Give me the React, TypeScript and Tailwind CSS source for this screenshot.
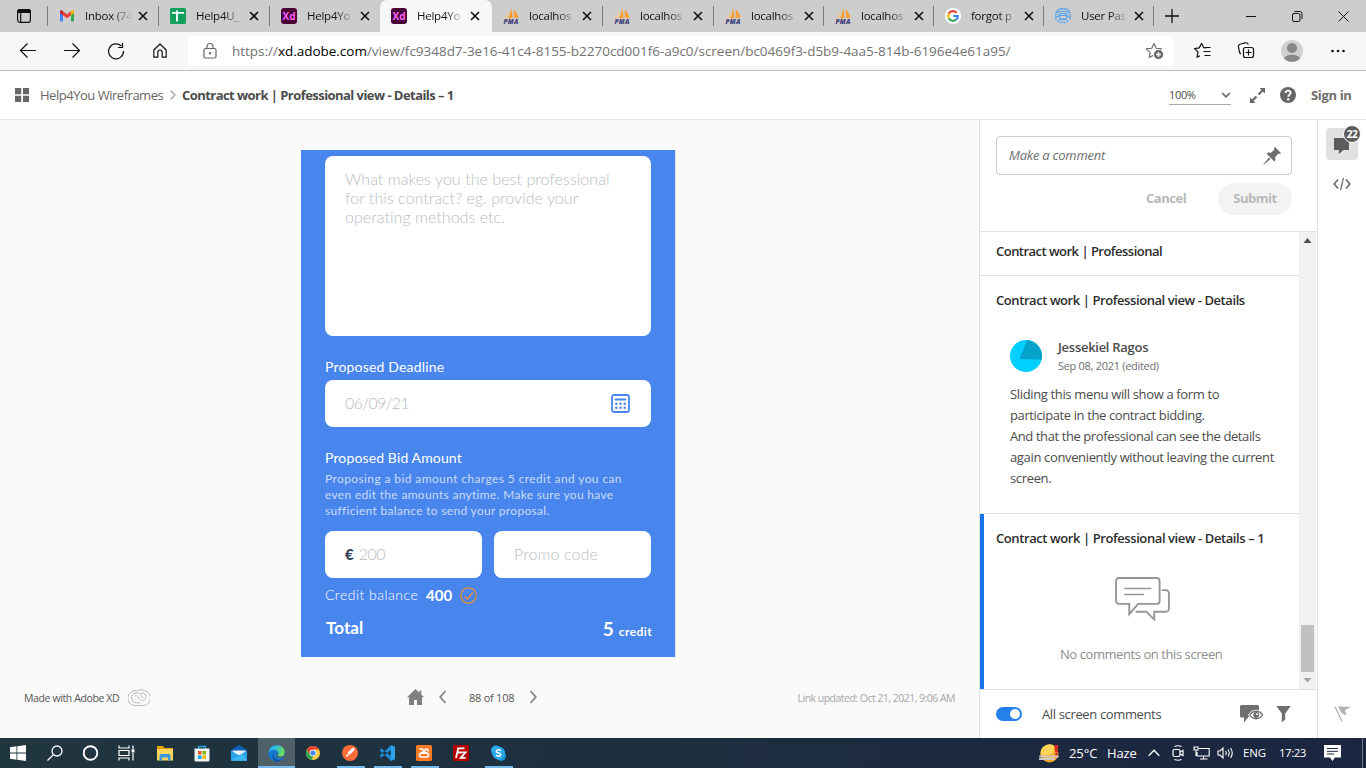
import React from "react";

const CLEAN = "font-['Open_Sans',sans-serif] whitespace-nowrap";
const SEGOE = "font-['Open_Sans',sans-serif] whitespace-nowrap";
const ROUND = "font-['Lato',sans-serif] whitespace-nowrap";

/* ---------- favicons ---------- */
const Gmail = () => (
  <svg width="16" height="16" viewBox="0 0 16 16">
    <path d="M1 4v8.600c0 .6.4 1 1 1h2V6.200z" fill="#4285f4" />
    <path d="M15 4v8.600c0 .6-.4 1-1 1h-2V6.200z" fill="#34a853" />
    <path d="M12 3.200v4l3-2.200V3.800c0-1.300-1.400-1.900-2.300-1.200z" fill="#fbbc04" />
    <path d="M4 7.200v-4L8 6.200l4-3v4l-4 3z" fill="#ea4335" />
    <path d="M1 5l3 2.200v-4l-.7-.6C2.400 1.900 1 2.500 1 3.800z" fill="#c5221f" />
  </svg>
);
const Sheets = () => (
  <svg width="16" height="16" viewBox="0 0 16 16">
    <rect width="16" height="16" rx="1.500" fill="#12a05c" />
    <path d="M2 4.900h12M7 2.500v11" stroke="#fff" strokeWidth="1.900" />
  </svg>
);
const Xd = () => (
  <span className="flex h-4 w-4 items-center justify-center rounded-[3px] bg-[#470137] font-['Open_Sans',sans-serif] text-[10px] leading-none font-bold text-[#ff61f6]">
    Xd
  </span>
);
const Pma = () => (
  <span className="flex h-4 w-4 flex-col items-center">
    <svg width="16" height="11" viewBox="0 0 16 11" className="shrink-0">
      <path d="M7.800 0C9 3 9.600 6 9.400 10L4.800 10.500C6.800 7.500 7.800 4 7.800 0z" fill="#f89c2e" />
      <path d="M10.500 1c2.500 2.500 4.500 5.500 5.200 9l-5.200-.2c.6-2.500.6-6 0-8.800z" fill="#f6a13c" />
      <path d="M5.800 2.500C5.200 6 3.500 8.500 .8 10.500l3.200-.3C5.500 8 6.300 5.500 5.800 2.500z" fill="#fbc98a" />
    </svg>
    <span className="font-['Open_Sans',sans-serif] text-[6.500px] leading-[5px] font-extrabold tracking-[0.2px] text-[#40407a] italic">PMA</span>
  </span>
);
const Google = () => (
  <svg width="16" height="16" viewBox="0 0 16 16">
    <circle cx="8" cy="8" r="8" fill="#fff" />
    <g fill="none" strokeWidth="2.200">
      <path d="M11.600 4.700A4.900 4.900 0 0 0 3.700 5.700" stroke="#ea4335" />
      <path d="M3.700 5.700a4.900 4.900 0 0 0 0 4.600" stroke="#fbbc05" />
      <path d="M3.700 10.300a4.900 4.900 0 0 0 7.400 1.400" stroke="#34a853" />
      <path d="M11.100 11.700A4.900 4.900 0 0 0 12.900 8H8.200" stroke="#4285f4" />
    </g>
  </svg>
);
const Fingerprint = () => (
  <svg width="16" height="16" viewBox="0 0 16 16" fill="none" stroke="#55a5ee" strokeWidth="1.100">
    <path d="M.8 12V6C1.500 2.300 4.500.6 8 .6S14.500 2.300 15.200 6v6" />
    <path d="M2 4.500C5 2.800 11 2.800 14 4.500M3 7C5.500 4.800 10.500 4.800 13 7M.8 9.500L5 7.500h6l4.200 2" />
    <path d="M4.500 8v1.500a2 2 0 0 0 2 1.500h3a2 2 0 0 0 2-1.500V8M2.500 14l2.500-2.500h6l2.500 2.500M5.500 15.500c.5-2 4.500-2 5 0" />
  </svg>
);

type TabProps = { icon: React.ReactNode; title: string; width: string; active?: boolean; sep?: boolean };
function Tab({ icon, title, width, active, sep }: TabProps) {
  return (
    <div className={`flex h-8 shrink-0 items-center ${width} ${active ? "rounded-t-[7px] bg-[#f7f7f7]" : ""}`}>
      <div className="ml-[11px] w-4 shrink-0">{icon}</div>
      <div
        className={`${SEGOE} ml-[10px] w-[46px] shrink-0 text-[11.5px] leading-[18px] tracking-[-0.25px] text-[#111] [mask-image:linear-gradient(90deg,#000_60%,#0002_98%)]`}
      >
        {title}
      </div>
      <svg className="ml-[7px] shrink-0" width="10" height="10" viewBox="0 0 10 10" stroke="#111" strokeWidth="1.600">
        <path d="M1 1l8 8M9 1L1 9" />
      </svg>
      <div className="grow" />
      {sep && <div className="h-5 w-px bg-[#7d7d7d]" />}
    </div>
  );
}

function TabStrip() {
  return (
    <div className="flex h-8 shrink-0 items-center bg-[#cdcdcd]">
      <div className="flex w-[48px] items-center justify-between pl-4">
        <svg width="16" height="16" viewBox="0 0 16 16" fill="none" stroke="#111" strokeWidth="1.200">
          <rect x="1.600" y="1.600" width="12.800" height="12.800" rx="2.500" />
          <path d="M1.600 3.500a2 2 0 0 1 2-2h8.800a2 2 0 0 1 2 2V4.500H1.600z" fill="#111" />
          <path d="M4.700 5v9.400" />
        </svg>
        <div className="h-5 w-px bg-[#7d7d7d]" />
      </div>
      <Tab width="w-[111px]" icon={<Gmail />} title="Inbox (74" sep />
      <Tab width="w-[111px]" icon={<Sheets />} title="Help4U_" sep />
      <Tab width="w-[110px]" icon={<Xd />} title="Help4Yo" />
      <Tab width="w-[112px]" icon={<Xd />} title="Help4Yo" active />
      <Tab width="w-[111px]" icon={<Pma />} title="localhos" sep />
      <Tab width="w-[111px]" icon={<Pma />} title="localhos" sep />
      <Tab width="w-[110px]" icon={<Pma />} title="localhos" sep />
      <Tab width="w-[110px]" icon={<Pma />} title="localhos" sep />
      <Tab width="w-[110px]" icon={<Google />} title="forgot p" sep />
      <Tab width="w-[110px]" icon={<Fingerprint />} title="User Pas" sep />
      <svg className="ml-[10px]" width="16" height="16" viewBox="0 0 16 16" stroke="#111" strokeWidth="1.300">
        <path d="M8 1v14M1 8h14" />
      </svg>
      <div className="grow" />
      <svg width="110" height="16" viewBox="0 0 110 16" className="mr-[13px] shrink-0" fill="none" stroke="#111" strokeWidth="1">
        <path d="M3 8.500h10" />
        <rect x="49.500" y="5.500" width="7.500" height="8" rx="1.500" />
        <path d="M51.500 3.500h5.500a2 2 0 0 1 2 2v5.500" />
        <path d="M95.500 3.500l10 10M105.500 3.500l-10 10" />
      </svg>
    </div>
  );
}

function Toolbar() {
  return (
    <div className="flex h-[39px] shrink-0 items-center border-b border-[#bdbdbd] bg-[#f7f7f7]">
      <svg width="188" height="38" viewBox="0 0 188 38" fill="none" stroke="#111" strokeWidth="1.200" className="shrink-0">
        <path d="M36 18.500H20.500M27.500 11.500l-7 7 7 7" />
        <path d="M64 18.500h15.500M72.500 11.500l7 7-7 7" />
        <path d="M121.300 14A7.500 7.500 0 1 0 123.500 19M122.500 11v4.500H118" />
        <path d="M153.800 18l6.200-6 6.200 6v7.200h-4v-5a2.200 2.200 0 0 0-4.400 0v5h-4z" strokeLinejoin="round" />
      </svg>
      <div className="flex h-[30px] w-[986px] shrink-0 items-center rounded-[4px] bg-white">
        <svg className="ml-[14px] shrink-0" width="16" height="18" viewBox="0 0 16 18" fill="none" stroke="#666" strokeWidth="1.200">
          <rect x="2" y="6.500" width="12" height="9.500" rx="1.500" />
          <path d="M5 6.500V4.500a3 3 0 0 1 6 0v2" />
          <circle cx="8" cy="11.300" r=".6" fill="#666" />
        </svg>
        <div className="ml-[14px] font-['Open_Sans',sans-serif] text-[13.5px] leading-[20px] tracking-[-0.02px] whitespace-nowrap text-[#727272]">
          https://<span className="text-black">xd.adobe.com</span>
          /view/fc9348d7-3e16-41c4-8155-b2270cd001f6-a9c0/screen/bc0469f3-d5b9-4aa5-814b-6196e4e61a95/
        </div>
        <div className="grow" />
        <svg className="mr-[9px] shrink-0" width="20" height="18" viewBox="0 0 20 18" fill="none" stroke="#666" strokeWidth="1.100">
          <path d="M9 1.500l2.200 4.700 5.300.6-4 3.600 1 5L9 13l-4.800 2.600 1-5.200-4-3.600 5.500-.6z" strokeLinejoin="round" />
          <circle cx="13.500" cy="12.500" r="5" fill="#666" stroke="#fff" strokeWidth="1" />
          <path d="M11 12.500h5M13.500 10v5" stroke="#fff" strokeWidth="1.300" />
        </svg>
      </div>
      <svg width="192" height="38" viewBox="0 0 192 38" fill="none" stroke="#111" strokeWidth="1.200" className="shrink-0">
        <path d="M32.500 16l-2.700-.3-2.300-4.200-2.300 4.400-4.700.7 3.500 3.400-1 5.200 3-1.500" strokeLinejoin="round" />
        <path d="M30.500 15.500h6M29.500 19.500h7M30.500 23.500h6" />
        <rect x="69.500" y="15.500" width="10" height="10" rx="2" />
        <path d="M74.500 17.500v6M71.500 20.500h6M67 22a3 3 0 0 1-1.500-2l-1-5a2.500 2.500 0 0 1 2-3l5-1.200a2.500 2.500 0 0 1 2.800 1.700" />
        <circle cx="118" cy="19" r="11" fill="#d2d0ce" stroke="none" />
        <circle cx="118" cy="16" r="5" fill="#8a8886" stroke="none" />
        <path d="M110 26.400c1.500-5 14.500-5 16 0a11 11 0 0 1-16 0z" fill="#8a8886" stroke="none" />
        <g fill="#111" stroke="none">
          <circle cx="158.500" cy="19" r="1.300" />
          <circle cx="164" cy="19" r="1.300" />
          <circle cx="169.500" cy="19" r="1.300" />
        </g>
      </svg>
    </div>
  );
}

function AppHeader() {
  return (
    <div className={`${CLEAN} flex h-[49px] shrink-0 items-center border-b border-[#e4e4e4] bg-white text-[13px] leading-5`}>
      <svg className="ml-[15px] shrink-0" width="14" height="14" viewBox="0 0 14 14" fill="#666">
        <path d="M0 0h6.200v6.200H0zM8 0h6.200v6.200H8zM0 7.800h6.200V14H0zM8 7.800h6.200V14H8z" />
      </svg>
      <div className="ml-[11px] w-[125px] tracking-[-0.48px] text-[#666]">Help4You Wireframes</div>
      <svg className="ml-[4px] shrink-0" width="8" height="12" viewBox="0 0 8 12" fill="none" stroke="#aaa" strokeWidth="1.500">
        <path d="M1.500 1.500L6 6l-4.500 4.500" />
      </svg>
      <div className="ml-[5px] font-bold tracking-[-0.55px] text-[#4b4b4b]">Contract work | Professional view - Details – 1</div>
      <div className="grow" />
      <div className="flex h-5 w-[62px] items-center justify-between border-b border-[#aaa]">
        <span className="text-[11px] leading-4 tracking-[-0.35px] text-[#4b4b4b]">100%</span>
        <svg width="10" height="8" viewBox="0 0 10 8" fill="none" stroke="#666" strokeWidth="1.700">
          <path d="M1.200 2L5 5.800 8.800 2" />
        </svg>
      </div>
      <svg className="ml-[18px]" width="17" height="17" viewBox="0 0 17 17" fill="#666" stroke="#666">
        <path d="M10.500 1h5.500v5.500zM1 10.500V16h5.500z" stroke="none" />
        <path d="M9.500 7.500l4-4M7.500 9.500l-4 4" strokeWidth="2" />
      </svg>
      <svg className="ml-[14px]" width="16" height="16" viewBox="0 0 16 16">
        <circle cx="8" cy="8" r="8" fill="#666" />
        <path d="M5.500 6.100c0-3.200 5.100-3.200 5.100-.3 0 1.700-2.300 1.700-2.300 3.900" fill="none" stroke="#fff" strokeWidth="1.900" />
        <circle cx="8.200" cy="12.300" r="1.200" fill="#fff" />
      </svg>
      <div className="mr-[15px] ml-[15px] w-[40px] font-bold tracking-[-0.35px] text-[#6e6e6e]">Sign in</div>
    </div>
  );
}

function Field({ className, children }: { className: string; children?: React.ReactNode }) {
  return <div className={`flex rounded-[8px] bg-white ${className}`}>{children}</div>;
}

function Artboard() {
  return (
    <div className={`${ROUND} ml-[301px] flex h-[507px] w-[375px] shrink-0 flex-col border-r border-[#d9e2f0] bg-[#4885ed] px-6 pt-[6px]`}>
      <Field className="h-[180px] w-[326px] shrink-0 pt-[13px] pl-5">
        <div className="text-[16px] leading-[19px] font-light text-[#b7bdc3]">
          <p className="tracking-[0.06px]">What makes you the best professional</p>
          <p className="tracking-[0.04px]">for this contract? eg. provide your</p>
          <p className="tracking-[0.04px]">operating methods etc.</p>
        </div>
      </Field>
      <div className="mt-[21px] text-[14px] leading-5 tracking-[0.18px] text-white">Proposed Deadline</div>
      <Field className="mt-[3px] h-[47px] w-[326px] shrink-0 items-center justify-between pr-[21px] pl-5">
        <span className="pb-px text-[16px] leading-5 font-light tracking-[-0.7px] text-[#b7bdc3]">06/09/21</span>
        <svg width="19" height="19" viewBox="0 0 19 19" fill="none" stroke="#4885ed" strokeWidth="1.800">
          <rect x="1" y="1" width="17" height="17" rx="2" />
          <path d="M4.500 5.500h10" strokeLinecap="round" />
          <g fill="#4885ed" stroke="none">
            <circle cx="5.300" cy="9.800" r="1.200" /><circle cx="9.500" cy="9.800" r="1.200" /><circle cx="13.700" cy="9.800" r="1.200" />
            <circle cx="5.300" cy="13.800" r="1.200" /><circle cx="9.500" cy="13.800" r="1.200" /><circle cx="13.700" cy="13.800" r="1.200" />
          </g>
        </svg>
      </Field>
      <div className="mt-[21px] text-[14px] leading-5 tracking-[0.13px] text-white">Proposed Bid Amount</div>
      <div className="mt-[3px] text-[12px] leading-4 text-[#cadcfa]">
        <p className="tracking-[0.39px]">Proposing a bid amount charges 5 credit and you can</p>
        <p className="tracking-[0.31px]">even edit the amounts anytime. Make sure you have</p>
        <p className="tracking-[0.31px]">sufficient balance to send your proposal.</p>
      </div>
      <div className="mt-3 flex w-[326px] justify-between text-[16px] leading-5 font-light text-[#b7bdc3]">
        <Field className="h-[47px] w-[157px] items-center pb-px pl-5">
          <span className="text-[15px] font-black text-[#2f4054]">€</span>
          <span className="ml-[5px] tracking-[-0.5px]">200</span>
        </Field>
        <Field className="h-[47px] w-[157px] items-center pb-px pl-5">
          <span className="tracking-[0.1px]">Promo code</span>
        </Field>
      </div>
      <div className="mt-[7px] flex items-center text-[14px] leading-5 text-white">
        <span className="w-[94px] font-light tracking-[0.48px]">Credit balance</span>
        <span className="ml-[7px] w-[27px] text-[15px] font-bold">400</span>
        <svg className="ml-[7px]" width="17" height="17" viewBox="0 0 17 17" fill="none" stroke="#e98b3a" strokeWidth="1.300">
          <circle cx="8.500" cy="8.500" r="7.700" />
          <path d="M4.500 9l3 3L13 5.500" />
        </svg>
      </div>
      <div className="mt-3 flex w-[327px] items-start justify-between pl-px font-bold text-white">
        <span className="text-[17px] leading-[22px] tracking-[0.1px]">Total</span>
        <span className="flex items-baseline pt-px">
          <span className="text-[19px] leading-[22px]">5</span>
          <span className="ml-[5px] text-[12px] tracking-[0.4px]">credit</span>
        </span>
      </div>
    </div>
  );
}

function Stage() {
  return (
    <div className="flex w-[979px] shrink-0 flex-col bg-[#fafafa] pt-[30px]">
      <Artboard />
      <div className={`${CLEAN} flex h-[81px] items-center text-[10.5px] leading-4 text-[#555]`}>
        <span className="ml-6 w-[96px] pt-px tracking-[-0.38px]">Made with Adobe XD</span>
        <svg className="ml-2 mt-px" width="22" height="18" viewBox="0 0 22 18" fill="none" stroke="#b8b8b8" strokeWidth="1">
          <path d="M8.500 16.500a7.500 7.500 0 1 1 .5-14.700C12 .2 14.500.5 16.500 1.500a7.700 7.700 0 0 1-3.500 15z" />
          <path d="M12.500 13.800H8.500a5 5 0 1 1 2.800-9.200c1.400 1 2.500 2.800 3.700 4.400" />
          <path d="M7 6.800c2-.5 3 1 4 2.300 1 1.500 2 2.500 3.500 2.300a3.700 3.700 0 1 0-2-6.900" />
        </svg>
        <svg className="-mt-px ml-[257px]" width="17" height="16" viewBox="0 0 17 16" fill="#808080">
          <path d="M8.500 0L0 8.200h2V16h5v-5h3v5h5V8.200h2l-2.700-2.600V1.500h-2v2.200z" />
        </svg>
        <svg className="-mt-px ml-[15px]" width="8" height="14" viewBox="0 0 8 14" fill="none" stroke="#808080" strokeWidth="1.700">
          <path d="M6.500 1L1.200 7l5.300 6" />
        </svg>
        <span className="ml-[22px] w-[46px] pt-px text-[11px] tracking-[-0.25px]">88 of 108</span>
        <svg className="-mt-px ml-[14px]" width="8" height="14" viewBox="0 0 8 14" fill="none" stroke="#808080" strokeWidth="1.700">
          <path d="M1.500 1l5.300 6-5.300 6" />
        </svg>
        <div className="grow" />
        <span className="mr-6 pt-px tracking-[-0.52px] text-[#a6a6a6]">Link updated: Oct 21, 2021, 9:06 AM</span>
      </div>
    </div>
  );
}

function CommentPanel() {
  return (
    <div className={`${CLEAN} flex w-[339px] shrink-0 flex-col border-x border-[#e1e1e1] bg-white text-[13px] leading-5`}>
      <div className="h-[111px] shrink-0 pt-4 pl-4">
        <div className="flex h-[39px] w-[296px] items-center justify-between rounded-[4px] border border-[#cacaca] pr-[10px] pl-3">
          <span className="pb-[2px] tracking-[-0.23px] text-[#6e6e6e] italic">Make a comment</span>
          <svg width="18" height="18" viewBox="0 0 18 18" fill="#6e6e6e">
            <path d="M12 0l6 6-1.500 1-1-.4-3.500 3.600c.8 2 .4 3.400-.6 4.400L3.400 6.600c1-1 2.500-1.300 4.400-.6l3.600-3.500-.4-1z" />
            <path d="M6 10.500L7.500 12 1.300 17.200.2 17.800l.6-1.100z" />
          </svg>
        </div>
        <div className="mt-2 flex w-[296px] items-center justify-end font-bold text-[#b8b8b8]">
          <span className="w-10 pb-[2px] tracking-[-0.45px]">Cancel</span>
          <span className="ml-8 flex h-8 w-[74px] items-center justify-center rounded-full bg-[#f3f3f3] pb-[2px] tracking-[-0.5px]">Submit</span>
        </div>
      </div>
      <div className="flex h-[458px] shrink-0 border-t border-[#e1e1e1]">
        <div className="flex w-[319px] shrink-0 flex-col">
          <div className="h-[44px] shrink-0 border-b border-[#e1e1e1] pt-[9px] pl-4 font-semibold tracking-[-0.52px] text-[#2c2c2c]">
            Contract work | Professional
          </div>
          <div className="h-[238px] shrink-0 border-b border-[#e1e1e1] pt-[14px] pl-4 text-[#4b4b4b]">
            <div className="font-semibold tracking-[-0.42px] text-[#2c2c2c]">Contract work | Professional view - Details</div>
            <div className="mt-[27px] flex items-center pl-[14px]">
              <svg width="32" height="32" viewBox="0 0 32 32">
                <circle cx="16" cy="16" r="16" fill="#00cfff" />
                <path d="M17.200 0A16 16 0 0 1 31.500 20L29 19.500 9.500 19z" fill="#04a3cb" />
              </svg>
              <div className="ml-4">
                <div className="leading-5 font-semibold tracking-[-0.28px]">Jessekiel Ragos</div>
                <div className="text-[11px] leading-[17px] tracking-[-0.3px] text-[#6e6e6e]">Sep 08, 2021 (edited)</div>
              </div>
            </div>
            <div className="mt-[10px] pl-[14px] leading-[21px] tracking-[-0.35px]">
              <p>Sliding this menu will show a form to</p>
              <p className="tracking-[-0.39px]">participate in the contract bidding.</p>
              <p className="tracking-[-0.41px]">And that the professional can see the details</p>
              <p>again conveniently without leaving the current</p>
              <p>screen.</p>
            </div>
          </div>
          <div className="flex h-[175px] shrink-0 flex-col border-l-4 border-[#1473e6] pt-[14px]">
            <div className="pl-3 font-semibold tracking-[-0.41px] text-[#2c2c2c]">Contract work | Professional view - Details – 1</div>
            <svg className="mt-[28px] ml-[130px]" width="56" height="45" viewBox="0 0 57 46" fill="none" stroke="#959595" strokeWidth="1.900">
              <path d="M5 2h38.500a3 3 0 0 1 3 3v20.500a3 3 0 0 1-3 3H24.500L15.500 39V28.500H5a3 3 0 0 1-3-3V5a3 3 0 0 1 3-3z" />
              <path d="M48.500 14.500H53a3 3 0 0 1 3 3V33.500a3 3 0 0 1-3 3H41v8L33 36.500H22" />
              <path d="M11 12.800h26.500M11 18.800h19" strokeLinecap="round" strokeWidth="1.500" />
            </svg>
            <div className="mt-[23px] ml-[76px] tracking-[-0.43px] text-[#8e8e8e]">No comments on this screen</div>
          </div>
        </div>
        <div className="flex w-[17px] flex-col items-center bg-[#f1f1f1] pt-1">
          <svg width="9" height="9" viewBox="0 0 9 9"><path d="M4.500 2L8.500 7h-8z" fill="#505050" /></svg>
          <div className="grow" />
          <div className="h-[47px] w-[13px] bg-[#c1c1c1]" />
          <svg className="mt-1 mb-[4px]" width="9" height="9" viewBox="0 0 9 9"><path d="M4.500 6.500L.5 2h8z" fill="#a3a3a3" /></svg>
        </div>
      </div>
      <div className="flex h-[49px] items-center border-t border-[#e1e1e1] pl-4 text-[#4b4b4b]">
        <div className="flex h-[14px] w-[26px] items-center justify-end rounded-full bg-[#2680eb] pr-[2px]">
          <div className="h-[10px] w-[10px] rounded-full bg-white" />
        </div>
        <span className="ml-5 tracking-[-0.36px]">All screen comments</span>
        <div className="grow" />
        <svg width="24" height="20" viewBox="0 0 24 20">
          <path d="M1.500 1h16a1.500 1.500 0 0 1 1.500 1.500V13H8.500L4 18.500V13.500H1.500A1.500 1.500 0 0 1 0 12V2.500A1.500 1.500 0 0 1 1.500 1z" fill="#6e6e6e" />
          <path d="M8 11c4-7 12.500-7 16 0-4 7-12 7-16 0z" fill="#fff" />
          <path d="M9.700 11c3.300-5 9.700-5 13 0-3.300 5-9.700 5-13 0z" fill="#fff" stroke="#6e6e6e" strokeWidth="1.300" />
          <circle cx="16.200" cy="11" r="3" fill="#6e6e6e" />
          <circle cx="17" cy="10.200" r="1" fill="#fff" />
        </svg>
        <svg className="mr-[26px] ml-3" width="15" height="18" viewBox="0 0 15 18" fill="#6e6e6e">
          <path d="M.3 1h14.400L9.200 8.500v6L5.800 17.500v-9z" />
        </svg>
      </div>
    </div>
  );
}

function Rail() {
  return (
    <div className="flex grow flex-col items-center bg-white pt-2">
      <div className="relative flex h-8 w-8 items-center justify-center rounded-[4px] bg-[#e1e1e1]">
        <svg width="16" height="16" viewBox="0 0 16 16" fill="#5c5c5c" className="mt-[3px]"><path d="M0 0h15v12H9.500L4.800 16v-4H0z" /></svg>
        <span className={`${CLEAN} absolute -top-[3px] left-[17px] flex h-[18px] w-[18px] items-center justify-center rounded-full border border-white bg-[#5c5c5c] text-[10px] leading-none font-bold tracking-[-0.4px] text-white`}>
          22
        </span>
      </div>
      <svg className="mt-[17px]" width="18" height="14" viewBox="0 0 18 14" fill="none" stroke="#6e6e6e" strokeWidth="1.700">
        <path d="M5 2.500L1.200 7 5 11.500M13 2.500L16.800 7 13 11.500" /><path d="M10.500.8L7.500 13.200" strokeWidth="1.300" />
      </svg>
      <div className="grow" />
      <svg className="mb-[16px]" width="17" height="17" viewBox="0 0 17 17">
        <path d="M4 1.200l13 .8-6 3.200 1.500 5.300L7.500 8z" fill="#b3b3b3" /><path d="M1 1.500l7 15" stroke="#b3b3b3" strokeWidth="1.300" />
      </svg>
    </div>
  );
}

function TaskItem({ children, running, active }: { children: React.ReactNode; running?: boolean; active?: boolean }) {
  return (
    <div className={`flex h-[30px] w-[37px] shrink-0 flex-col items-center first:w-9 ${active ? "bg-[#506069]" : ""}`}>
      <div className="flex h-7 items-center pt-[2px]">{children}</div>
      {active ? <div className="h-[2px] w-full bg-[#76b9ed]" /> : running ? <div className="h-[2px] w-[28px] bg-[#76b9ed]" /> : null}
    </div>
  );
}

function Taskbar() {
  return (
    <div className="flex h-[30px] shrink-0 bg-linear-to-r from-[#20363f] via-[#1d2e3f] to-[#1b2540]">
      <TaskItem>
        <svg width="16" height="16" viewBox="0 0 16 16" fill="#fff"><path d="M0 2.200l6.500-.9v6.300H0zM7.300 1.200L16 0v7.600H7.300zM0 8.400h6.500v6.300L0 13.800zM7.300 8.400H16V16l-8.700-1.200z" /></svg>
      </TaskItem>
      <TaskItem>
        <svg width="16" height="16" viewBox="0 0 16 16" fill="none" stroke="#fff" strokeWidth="1.300"><circle cx="10" cy="6" r="5" /><path d="M6.400 9.600L.5 15.500" /></svg>
      </TaskItem>
      <TaskItem>
        <svg width="18" height="16" viewBox="0 0 18 16" fill="none" stroke="#fff" strokeWidth="1.900"><circle cx="7.500" cy="8" r="6.800" /></svg>
      </TaskItem>
      <TaskItem>
        <svg className="mr-[4px]" width="17" height="16" viewBox="0 0 17 16" fill="none" stroke="#fff" strokeWidth="1.200"><path d="M1 .5V3h10V.5M1 15.500V13h10v2.500M1 5.500h10v5H1zM15 .5v4M15 8v7.500" /><path d="M13.500 4.500h3v3h-3z" fill="#fff" stroke="none" /></svg>
      </TaskItem>
      <TaskItem>
        <svg className="mr-px" width="16" height="15" viewBox="0 0 16 15"><path d="M0 0h6l1.500 2H16v4H0z" fill="#e8a200" /><path d="M0 3h16v11.500H0z" fill="#ffd65c" /><path d="M2.500 14.500V9.500a1.500 1.500 0 0 1 1.500-1.500h8a1.500 1.500 0 0 1 1.500 1.500v5H11V11.500H5v3z" fill="#3a95dc" /></svg>
      </TaskItem>
      <TaskItem>
        <svg className="mr-[2px]" width="16" height="17" viewBox="0 0 16 17"><path d="M4.500 4V1.500h7V4" fill="none" stroke="#29a8e8" strokeWidth="1.300" /><path d="M.5 3.500h15V15a1.500 1.500 0 0 1-1.500 1.500H2A1.500 1.500 0 0 1 .5 15z" fill="#f2f2f2" /><path d="M4 6h3.500v3.500H4z" fill="#f25022" /><path d="M8.500 6H12v3.500H8.500z" fill="#7fba00" /><path d="M4 10.500h3.500V14H4z" fill="#00a4ef" /><path d="M8.500 10.500H12V14H8.500z" fill="#ffb900" /></svg>
      </TaskItem>
      <TaskItem>
        <svg className="mr-px" width="16" height="16" viewBox="0 0 16 16"><path d="M0 5l8-5 8 5v3H0z" fill="#0f5fb5" /><path d="M1.500 5.500h13V10h-13z" fill="#e9f3fb" /><path d="M0 5.500l8 5 8-5V15a.8.8 0 0 1-.8.8H.8A.8.8 0 0 1 0 15z" fill="#2ba3ec" /><path d="M0 15.500L11 8.700l5 6.300v.8H.8z" fill="#40b8f6" /></svg>
      </TaskItem>
      <TaskItem active>
        <svg width="17" height="17" viewBox="0 0 17 17">
          <defs>
            <linearGradient id="edgeTop" x1="0" y1="0" x2="1" y2="0.500"><stop offset="0.300" stopColor="#28b4ee" /><stop offset="1" stopColor="#66e05a" /></linearGradient>
          </defs>
          <circle cx="8.500" cy="8.500" r="8.200" fill="#1579cf" />
          <path d="M.5 8C1 3 4.500.3 8.700.3c5 0 8 3.200 8 7 0 3-2.200 4.500-4.500 4.500-2 0-2.800-.8-2-2C11.500 7 9 4.800 6.200 4.800 3.500 4.800 1 6 .5 8z" fill="url(#edgeTop)" />
          <path d="M6 8c-1.500 4 1.500 7 5 7 2 0 3.500-.5 4.700-2-2 3-5 3.900-7.500 3.600C4.500 15.500 3.500 11 6 8z" fill="#0c4f9f" />
          <path d="M10.200 9.800c-.8 1.200 0 2 2 2 1 0 2.500-.3 4.300-1.500-.5 1.700-2 3.100-4.500 2.900-2.800-.2-4-2.500-3.600-4.300.4-1.200 2.300-.6 1.800.9z" fill="#506069" />
        </svg>
      </TaskItem>
      <TaskItem>
        <svg className="mr-px" width="14" height="14" viewBox="0 0 14 14"><circle cx="7" cy="7" r="7" fill="#ffcd40" /><path d="M.9 3.500A7 7 0 0 1 13.100 3.500H7L4.200 8.800z" fill="#ea4335" /><path d="M.9 3.500L4 8.800 7 10.500 6 14A7 7 0 0 1 .9 3.500z" fill="#34a853" /><circle cx="7" cy="7" r="3.300" fill="#fff" /><circle cx="7" cy="7" r="2.600" fill="#4285f4" /></svg>
      </TaskItem>
      <TaskItem running>
        <svg className="mr-px" width="16" height="16" viewBox="0 0 16 16"><circle cx="8" cy="8" r="8" fill="#ff6c37" /><path d="M12.300 3.200c-.8-.8-2-.3-2.500.3L5.500 8l2 2 4.500-4.500c.6-.6 1-1.600.3-2.300zM5 8.700L4 12l3-1.300z" fill="#fff" /></svg>
      </TaskItem>
      <TaskItem running>
        <svg className="mr-px" width="16" height="16" viewBox="0 0 16 16"><path d="M1 4.700L2.300 3.500 12 11v4.800L.9 5.800zM1 11.300l1.300 1.200L12 5V.2L.9 10.200z" fill="#1c8ad6" /><path d="M11.800 0L16 1.800v12.400L11.800 16z" fill="#2ba4ee" /></svg>
      </TaskItem>
      <TaskItem running>
        <svg className="mr-px" width="16" height="16" viewBox="0 0 16 16" fill="none" stroke="#fff" strokeWidth="1.600">
          <rect width="16" height="16" rx="1.500" fill="#fb7a24" stroke="none" />
          <path d="M3.500 4h2a1.700 1.700 0 0 1 1.700 1.700V8H5.500a2 2 0 0 0 0 4h5a2 2 0 0 0 0-4H8.800V5.700A1.700 1.700 0 0 1 12 5v1.500" strokeLinejoin="round" />
          <path d="M5 8h6" />
        </svg>
      </TaskItem>
      <TaskItem>
        <svg className="mr-px" width="16" height="16" viewBox="0 0 16 16"><rect width="16" height="16" rx="1" fill="#b60000" /><path d="M3 13L5.200 3.300H11.500M4.300 7.500h3.500M7.500 7.300h5L7.700 12.800h5" fill="none" stroke="#fff" strokeWidth="1.800" /></svg>
      </TaskItem>
      <TaskItem running>
        <svg className="mr-px" width="15" height="16" viewBox="0 0 15 16"><circle cx="5" cy="5.500" r="5" fill="#29a9ee" /><circle cx="10" cy="11" r="5" fill="#1b91dc" /><circle cx="7.500" cy="8" r="6.500" fill="#28a8ea" /><path d="M9.800 5.700C8.500 4.300 5.300 4.600 5.300 6.300c0 2.100 4.500 1.200 4.500 3.400 0 1.900-3.600 1.900-4.700.3" fill="none" stroke="#fff" strokeWidth="1.500" /></svg>
      </TaskItem>
      <div className="grow" />
      <div className={`${SEGOE} flex h-[30px] shrink-0 items-center text-[13px] leading-5 text-white`}>
        <svg width="21" height="19" viewBox="0 0 21 19" className="mr-[9px]">
          <circle cx="10.500" cy="9.500" r="9" fill="#f6a623" /><path d="M2 12a9 9 0 0 1 13-10.500L14 10z" fill="#ffd35a" />
          <path d="M1 12.500h18M0 15h15" stroke="#cfcac0" strokeWidth="1.800" strokeLinecap="round" /><path d="M15.500 1h4l-.8 7h-2.400z" fill="#d9262b" /><circle cx="17.500" cy="10" r="1.400" fill="#d9262b" />
        </svg>
        <span className="w-[32px] tracking-[-0.1px]">25°C</span>
        <span className="ml-[6px] w-[31px] tracking-[-0.15px]">Haze</span>
        <svg className="ml-[10px]" width="12" height="8" viewBox="0 0 12 8" fill="none" stroke="#fff" strokeWidth="1.300"><path d="M.7 6.700L6 1.300l5.300 5.400" /></svg>
        <svg className="ml-[12px]" width="12" height="16" viewBox="0 0 12 16" fill="none" stroke="#fff" strokeWidth="1.200"><path d="M2.500 1.500Q6 0 9.500 1.500M2.500 14.500Q6 16 9.500 14.500" /><rect x="1" y="4.500" width="7" height="7" rx="1.500" /><path d="M8 7l3-1.500v5L8 9" /></svg>
        <svg className="ml-[9px]" width="17" height="14" viewBox="0 0 17 14" fill="none" stroke="#fff" strokeWidth="1.100"><path d="M6 2.500h10.200v7.500H4V6M10.500 10v3M7 13h7.500M1 1h4v3H1zM3 4v6" /></svg>
        <svg className="ml-[7px]" width="17" height="14" viewBox="0 0 17 14" fill="none" stroke="#fff" strokeWidth="1.100"><path d="M1 5v4h2l3 3V2L3 5zM8.500 5q1.500 2 0 4M11 3.500q2.500 3.500 0 7M13.500 2q3.500 5 0 10" /></svg>
        <span className="ml-[9px] w-[24px] text-[11.5px] tracking-[-0.15px]">ENG</span>
        <span className="ml-[12px] w-[28px] text-[11.5px] tracking-[-0.5px]">17:23</span>
        <svg className="ml-[17px] mr-[21px]" width="17" height="16" viewBox="0 0 17 16"><path d="M0 0h17v12.500H11L8.500 16 6 12.500H0z" fill="#fff" /><path d="M3 3.500h11M3 6.300h11M3 9h7" stroke="#1b2540" strokeWidth="1" /></svg>
        <div className="mr-[3px] h-[30px] w-px bg-[#6b7686]" />
      </div>
    </div>
  );
}

export default function App() {
  return (
    <div className="flex h-[768px] w-[1366px] flex-col overflow-hidden bg-white">
      <TabStrip />
      <Toolbar />
      <AppHeader />
      <div className="flex h-[618px] shrink-0">
        <Stage />
        <CommentPanel />
        <Rail />
      </div>
      <Taskbar />
    </div>
  );
}
